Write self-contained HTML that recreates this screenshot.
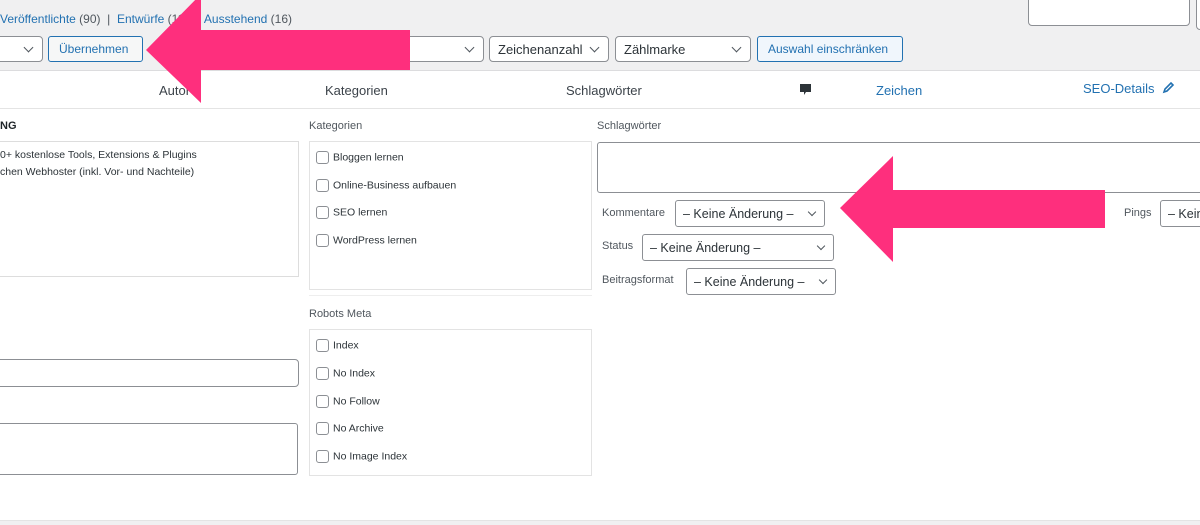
<!DOCTYPE html>
<html><head><meta charset="utf-8"><style>
*{box-sizing:border-box;margin:0;padding:0}
body{width:1200px;height:525px;overflow:hidden;background:#fff;font-family:"Liberation Sans",Arial,sans-serif;position:relative;color:#3c434a}
.a{position:absolute}
.top{left:0;top:0;width:1200px;height:70px;background:#f0f0f1}
.sel{position:absolute;height:26px;border:1px solid #8c8f94;border-radius:4px;background:#fff;font-size:13px;color:#2c3338;padding:4px 8px;line-height:17px}
.sel:after{content:"";position:absolute;right:10px;top:7px;width:6px;height:6px;border-right:1.5px solid #50575e;border-bottom:1.5px solid #50575e;transform:rotate(45deg)}
.btn{position:absolute;height:26px;border:1px solid #2271b1;border-radius:3px;background:#f6f7f7;font-size:12px;color:#2271b1;padding:5px 10px;line-height:14px}
.lnk{color:#2271b1}
.hdr{left:0;top:70px;width:1200px;height:39px;border-top:1px solid #dcdcde;border-bottom:1px solid #e4e4e4;background:#fff;font-size:13px}
.lbl{font-size:11px;color:#50575e}
.box{position:absolute;border:1px solid #e3e3e3;background:#fff}
.cb{font-size:10.5px;color:#2c3338;position:absolute;left:6px}
.cb i{display:inline-block;width:13px;height:13px;border:1px solid #8c8f94;border-radius:3px;vertical-align:middle;margin-right:4px}
.inp{position:absolute;border:1px solid #8c8f94;border-radius:4px;background:#fff}
.s2{position:absolute;height:27px;border:1px solid #8c8f94;border-radius:3px;background:#fff;font-size:12.5px;color:#2c3338;padding:5px 7px;line-height:16px}
.s2:after{content:"";position:absolute;right:9px;top:8px;width:5px;height:5px;border-right:1.5px solid #50575e;border-bottom:1.5px solid #50575e;transform:rotate(45deg)}
</style></head><body>
<div class="a top"></div>
<div class="a" style="left:0;top:12px;font-size:12px;color:#50575e"><span class="lnk">Veröffentlichte</span> (90) &nbsp;|&nbsp; <span class="lnk">Entwürfe</span> (11) &nbsp;|&nbsp; <span class="lnk">Ausstehend</span> (16)</div>
<div class="inp" style="left:1028px;top:-4px;width:162px;height:30px;border-color:#8c8f94"></div>
<div class="inp" style="left:1196px;top:-4px;width:20px;height:34px"></div>
<div class="sel" style="left:-10px;top:36px;width:53px"></div>
<div class="btn" style="left:48px;top:36px;width:95px">Übernehmen</div>
<div class="sel" style="left:380px;top:36px;width:104px"></div>
<div class="sel" style="left:489px;top:36px;width:120px">Zeichenanzahl</div>
<div class="sel" style="left:615px;top:36px;width:136px">Zählmarke</div>
<div class="btn" style="left:757px;top:36px;width:146px;background:#f0f6fc">Auswahl einschränken</div>
<div class="a hdr">
<span class="a" style="left:159px;top:12px">Autor</span>
<span class="a" style="left:325px;top:12px">Kategorien</span>
<span class="a" style="left:566px;top:12px">Schlagwörter</span>
<svg class="a" style="left:799px;top:12px" width="13" height="14" viewBox="0 0 13 14"><path d="M1 1h11v8H7l-2 3V9H1z" fill="#2c3338"/></svg>
<span class="a lnk" style="left:876px;top:12px">Zeichen</span>
<span class="a lnk" style="left:1083px;top:10px">SEO-Details</span>
<svg class="a" style="left:1162px;top:10px" width="13" height="13" viewBox="0 0 13 13"><path d="M2 11l1-3 6-6 2 2-6 6z" fill="none" stroke="#2271b1" stroke-width="1.6"/></svg>
</div>
<div class="a" style="left:0;top:120px;font-size:11px;color:#1d2327;font-weight:bold">NG</div>
<div class="box" style="left:-5px;top:141px;width:304px;height:136px;border-color:#ddd"></div>
<div class="a" style="left:0;top:147px;font-size:10.5px;color:#2c3338;line-height:17px">0+ kostenlose Tools, Extensions &amp; Plugins<br>chen Webhoster (inkl. Vor- und Nachteile)</div>
<div class="a lbl" style="left:309px;top:120px">Kategorien</div>
<div class="box" style="left:309px;top:141px;width:283px;height:149px">
<div class="cb" style="top:9px"><i></i>Bloggen lernen</div>
<div class="cb" style="top:37px"><i></i>Online-Business aufbauen</div>
<div class="cb" style="top:64px"><i></i>SEO lernen</div>
<div class="cb" style="top:92px"><i></i>WordPress lernen</div>
</div>
<div class="a" style="left:309px;top:295px;width:283px;border-top:1px solid #eee"></div>
<div class="a lbl" style="left:309px;top:308px">Robots Meta</div>
<div class="box" style="left:309px;top:329px;width:283px;height:147px">
<div class="cb" style="top:9px"><i></i>Index</div>
<div class="cb" style="top:37px"><i></i>No Index</div>
<div class="cb" style="top:65px"><i></i>No Follow</div>
<div class="cb" style="top:92px"><i></i>No Archive</div>
<div class="cb" style="top:120px"><i></i>No Image Index</div>
</div>
<div class="inp" style="left:-5px;top:359px;width:304px;height:28px"></div>
<div class="inp" style="left:-5px;top:423px;width:303px;height:52px;border-radius:3px"></div>
<div class="a lbl" style="left:597px;top:120px">Schlagwörter</div>
<div class="inp" style="left:597px;top:142px;width:620px;height:51px;border-radius:3px"></div>
<div class="a lbl" style="left:602px;top:207px">Kommentare</div>
<div class="s2" style="left:675px;top:200px;width:150px">– Keine Änderung –</div>
<div class="a lbl" style="left:602px;top:240px">Status</div>
<div class="s2" style="left:642px;top:234px;width:192px">– Keine Änderung –</div>
<div class="a lbl" style="left:602px;top:274px">Beitragsformat</div>
<div class="s2" style="left:686px;top:268px;width:150px">– Keine Änderung –</div>
<div class="a lbl" style="left:1124px;top:207px">Pings</div>
<div class="s2" style="left:1160px;top:200px;width:80px">– Keine</div>
<div class="a" style="left:0;top:520px;width:1200px;height:5px;background:#f0f0f1;border-top:1px solid #e4e4e4"></div>
<svg class="a" style="left:0;top:0" width="1200" height="525">
<polygon points="146,50 201,-6 201,30 410,30 410,70 201,70 201,103" fill="#fe2f7d"/>
<polygon points="840,208 893,156 893,190 1105,190 1105,228 893,228 893,262" fill="#fe2f7d"/>
</svg>
</body></html>
